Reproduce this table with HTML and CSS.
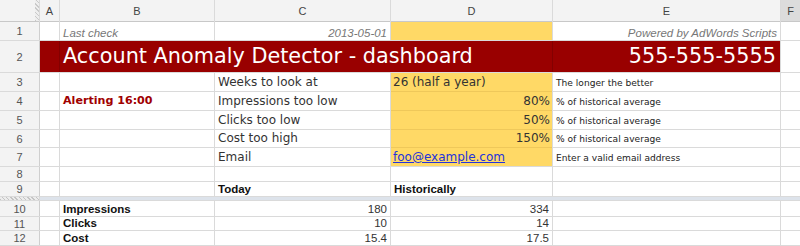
FILE: index.html
```html
<!DOCTYPE html>
<html>
<head>
<meta charset="utf-8">
<link rel="stylesheet" href="styles.css">
</head>
<body>
<div class="sheet">
  <div class="corner"><div class="hatch-v"></div></div>
  <div class="ch">A</div><div class="ch">B</div><div class="ch">C</div><div class="ch">D</div><div class="ch">E</div><div class="ch sel">F</div>

  <div class="rh">1</div>
  <div class="c"></div>
  <div class="c ital">Last check</div>
  <div class="c ital r">2013-05-01</div>
  <div class="c y"></div>
  <div class="c ital r">Powered by AdWords Scripts</div>
  <div class="c"></div>

  <div class="rh">2</div>
  <div class="banner">
    <div class="banner-a"></div>
    <div class="banner-title">Account Anomaly Detector - dashboard</div>
    <div class="banner-phone">555-555-5555</div>
  </div>
  <div class="c"></div>

  <div class="rh">3</div>
  <div class="c"></div>
  <div class="c"></div>
  <div class="c v">Weeks to look at</div>
  <div class="c y yd v">26 (half a year)</div>
  <div class="c note">The longer the better</div>
  <div class="c"></div>

  <div class="rh">4</div>
  <div class="c"></div>
  <div class="c alert">Alerting 16:00</div>
  <div class="c v">Impressions too low</div>
  <div class="c y yd v r">80%</div>
  <div class="c note">% of historical average</div>
  <div class="c"></div>

  <div class="rh">5</div>
  <div class="c"></div>
  <div class="c"></div>
  <div class="c v">Clicks too low</div>
  <div class="c y yd v r">50%</div>
  <div class="c note">% of historical average</div>
  <div class="c"></div>

  <div class="rh">6</div>
  <div class="c"></div>
  <div class="c"></div>
  <div class="c v">Cost too high</div>
  <div class="c y yd v r">150%</div>
  <div class="c note">% of historical average</div>
  <div class="c"></div>

  <div class="rh">7</div>
  <div class="c"></div>
  <div class="c"></div>
  <div class="c v">Email</div>
  <div class="c y v"><a class="link" href="#">foo@example.com</a></div>
  <div class="c note">Enter a valid email address</div>
  <div class="c"></div>

  <div class="rh">8</div>
  <div class="c"></div><div class="c"></div><div class="c"></div><div class="c"></div><div class="c"></div><div class="c"></div>

  <div class="rh">9</div>
  <div class="c"></div>
  <div class="c"></div>
  <div class="c b">Today</div>
  <div class="c b">Historically</div>
  <div class="c"></div>
  <div class="c"></div>

  <div class="hatch-h"></div>
  <div class="freeze"></div>

  <div class="rh">10</div>
  <div class="c"></div>
  <div class="c b">Impressions</div>
  <div class="c num r">180</div>
  <div class="c num r">334</div>
  <div class="c"></div>
  <div class="c"></div>

  <div class="rh">11</div>
  <div class="c"></div>
  <div class="c b">Clicks</div>
  <div class="c num r">10</div>
  <div class="c num r">14</div>
  <div class="c"></div>
  <div class="c"></div>

  <div class="rh">12</div>
  <div class="c"></div>
  <div class="c b">Cost</div>
  <div class="c num r">15.4</div>
  <div class="c num r">17.5</div>
  <div class="c"></div>
  <div class="c"></div>
</div>
</body>
</html>
```
FILE: styles.css
```css
html, body {
  margin: 0;
  padding: 0;
  background: #fff;
}

.sheet {
  display: grid;
  width: 800px;
  grid-template-columns: 39px 19px 154px 175px 161px 227px 19px;
  grid-template-rows: 21px 18px 31px 18px 18px 18px 17px 18px 14px 14px 3px 15px 13px 14px;
  gap: 1px;
  background: #dadada;
  padding-bottom: 1px;
  font-family: "Liberation Sans", Arial, sans-serif;
}

.corner {
  background: #f3f3f3;
  display: flex;
  justify-content: flex-end;
  box-shadow: 0 1px 0 #c8c8c8;
}

.hatch-v {
  width: 4px;
  background: repeating-linear-gradient(45deg, #c9c9c9 0 1px, #eeeeee 1px 3px);
}

.ch {
  background: #f3f3f3;
  color: #444;
  font-size: 11px;
  display: flex;
  align-items: center;
  justify-content: center;
  box-shadow: 0 1px 0 #c8c8c8;
}

.ch.sel {
  background: #dcdcdc;
}

.rh {
  background: #f3f3f3;
  color: #555;
  font-size: 11px;
  display: flex;
  align-items: center;
  justify-content: center;
  box-shadow: 1px 0 0 #cfcfcf;
}

.c {
  background: #fff;
  display: flex;
  align-items: flex-end;
  padding: 0 3px 1px 3px;
  overflow: hidden;
  white-space: nowrap;
  color: #333;
  font-size: 11.5px;
}

.r {
  justify-content: flex-end;
}

.y {
  background: #ffd966;
  padding-left: 2px;
  padding-right: 2px;
}

.yd {
  box-shadow: 0 1px 0 #efc85a;
}

.ital {
  font-style: italic;
  color: #777;
}

.v {
  font-family: "DejaVu Sans", Verdana, sans-serif;
  font-size: 12px;
  color: #333;
  padding-bottom: 2px;
}

.note {
  font-family: "DejaVu Sans", Verdana, sans-serif;
  font-size: 9.1px;
  color: #222;
  padding-bottom: 3px;
}

.alert {
  font-family: "DejaVu Sans", Verdana, sans-serif;
  font-weight: bold;
  font-size: 11.1px;
  color: #a00000;
  padding-bottom: 3px;
}

.b {
  font-weight: bold;
  color: #111;
}

.num {
  color: #333;
}

.link {
  color: #2233dd;
  text-decoration: underline;
}

.banner {
  grid-column: 2 / 7;
  background: #990000;
  display: flex;
  color: #fff;
  font-family: "DejaVu Sans", Verdana, sans-serif;
  font-size: 20.8px;
  white-space: nowrap;
}

.banner-a {
  width: 19px;
  border-right: 1px solid #830000;
}

.banner-title {
  flex: 1;
  display: flex;
  align-items: flex-end;
  padding: 0 0 4px 3px;
  border-right: 1px solid #830000;
}

.banner-phone {
  width: 227px;
  box-sizing: border-box;
  display: flex;
  align-items: flex-end;
  justify-content: flex-end;
  padding: 0 4px 4px 0;
}

.hatch-h {
  background: repeating-linear-gradient(45deg, #c4c4c4 0 1px, #ececec 1px 3px);
}

.freeze {
  grid-column: 2 / 8;
  background: #dde3eb;
}
```
